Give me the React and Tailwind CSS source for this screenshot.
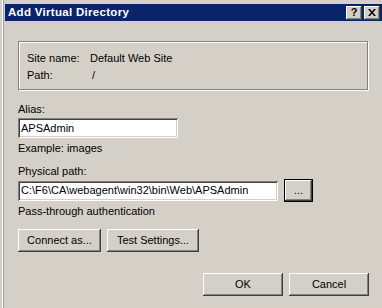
import React from 'react';

const raised =
  'bg-[#d4d0c8] shadow-[inset_-1px_-1px_#404040,inset_1px_1px_#ffffff,inset_-2px_-2px_#808080,inset_2px_2px_#d4d0c8]';
const sunken =
  'bg-white shadow-[inset_1px_1px_#808080,inset_-1px_-1px_#ffffff,inset_2px_2px_#404040,inset_-2px_-2px_#d4d0c8]';

function Button({ children, className = '' }) {
  return (
    <button className={`${raised} flex items-center justify-center text-[11px] text-black ${className}`}>
      {children}
    </button>
  );
}

export default function App() {
  return (
    <div
      className="w-[382px] h-[308px] overflow-hidden bg-[#d4d0c8] flex text-black text-[11px] leading-[13px] select-none"
      style={{ fontFamily: '"Liberation Sans", Arial, sans-serif' }}
    >
      {/* window frame edge on the left */}
      <div className="w-[2px] shrink-0 bg-[#d4d0c8]" />
      <div className="w-px shrink-0 bg-white" />
      <div className="w-px shrink-0 bg-[#a0a0a0]" />

      <div className="flex-1 flex flex-col pt-[4px]">
        {/* title bar */}
        <div className="ml-px h-[17px] bg-[#0a246a] flex items-center pl-[3px] pr-[2px]">
          <span className="text-white font-bold text-[11.5px] tracking-[0.3px]">Add Virtual Directory</span>
          <div className="ml-auto flex gap-[2px]">
            <div className={`${raised} w-[16px] h-[14px] flex items-center justify-center font-bold text-[11px] leading-none`}>?</div>
            <div className={`${raised} w-[16px] h-[14px] flex items-center justify-center`}>
              <svg width="8" height="7" viewBox="0 0 8 7">
                <path d="M0 0h2l2 2.5L6 0h2L5 3.5 8 7H6L4 4.5 2 7H0l3-3.5z" fill="#000" />
              </svg>
            </div>
          </div>
        </div>

        <div className="flex flex-col pl-[14px]">
          {/* site info group */}
          <div className="mt-[20px] w-[350px] h-[49px] border border-[#808080] shadow-[1px_1px_0_#ffffff,inset_1px_1px_0_#ffffff] pt-[8px] pl-[8px]">
            <div className="flex h-[17px] items-center">
              <span className="w-[63px]">Site name:</span>
              <span>Default Web Site</span>
            </div>
            <div className="flex h-[17px] items-center">
              <span className="w-[65px]">Path:</span>
              <span>/</span>
            </div>
          </div>

          <div className="mt-[13px]">Alias:</div>
          <div className={`${sunken} mt-[2px] w-[160px] h-[20px] flex items-center pl-[3px]`}>APSAdmin</div>
          <div className="mt-[4px]">Example: images</div>

          <div className="mt-[10px]">Physical path:</div>
          <div className="mt-[1px] flex items-center gap-[6px]">
            <div className={`${sunken} w-[260px] h-[20px] flex items-center pl-[3px] whitespace-nowrap overflow-hidden`}>
              C:\F6\CA\webagent\win32\bin\Web\APSAdmin
            </div>
            <div className="border border-black">
              <Button className="w-[27px] h-[21px]">...</Button>
            </div>
          </div>
          <div className="mt-[3px]">Pass-through authentication</div>

          <div className="mt-[11px] flex gap-[6px]">
            <Button className="w-[83px] h-[23px]">Connect as...</Button>
            <Button className="w-[92px] h-[23px]">Test Settings...</Button>
          </div>

          <div className="mt-[21px] flex gap-[6px] pl-[185px]">
            <Button className="w-[80px] h-[23px]">OK</Button>
            <Button className="w-[80px] h-[23px]">Cancel</Button>
          </div>
        </div>
      </div>
    </div>
  );
}
